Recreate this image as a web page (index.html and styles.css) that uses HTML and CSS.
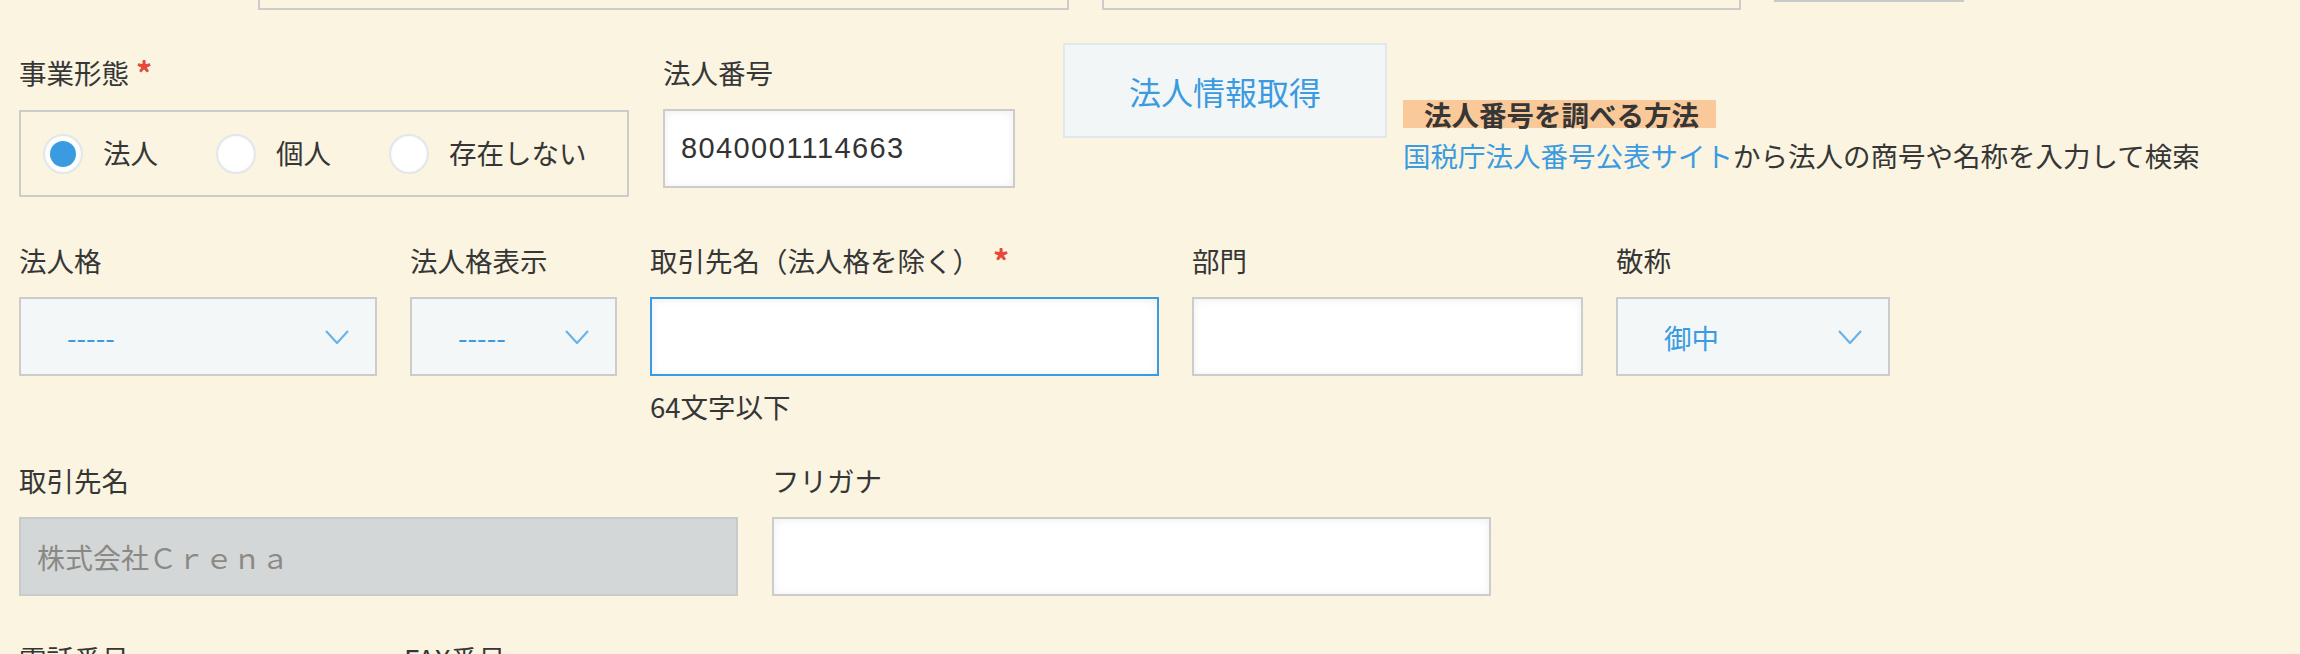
FILE: index.html
```html
<!DOCTYPE html>
<html lang="ja">
<head>
<meta charset="utf-8">
<title>取引先フォーム</title>
<link rel="stylesheet" href="styles.css">
</head>
<body>
<div class="top-strip">
  <div class="top-box top-box-1"></div>
  <div class="top-box top-box-2"></div>
  <div class="top-bar"></div>
</div>

<div class="form">
  <div class="row row1">
    <div class="field col-type">
      <div class="label">事業形態<span class="req">*</span></div>
      <div class="radio-box">
        <label class="radio-item"><span class="radio checked"><span class="dot"></span></span><span class="radio-text">法人</span></label>
        <label class="radio-item"><span class="radio"></span><span class="radio-text">個人</span></label>
        <label class="radio-item"><span class="radio"></span><span class="radio-text">存在しない</span></label>
      </div>
    </div>
    <div class="field col-number">
      <div class="label">法人番号</div>
      <div class="control input number">8040001114663</div>
    </div>
    <div class="fetch-btn">法人情報取得</div>
    <div class="howto">
      <div class="howto-title">法人番号を調べる方法</div>
      <div class="howto-text"><span class="link">国税庁法人番号公表サイト</span>から法人の商号や名称を入力して検索</div>
    </div>
  </div>

  <div class="row row2">
    <div class="field w-kaku">
      <div class="label">法人格</div>
      <div class="control select"><span>-----</span><svg class="chev" viewBox="0 0 24 14" width="24" height="14"><polyline points="1,1 12,13 23,1"/></svg></div>
    </div>
    <div class="field w-kakudisp">
      <div class="label">法人格表示</div>
      <div class="control select"><span>-----</span><svg class="chev" viewBox="0 0 24 14" width="24" height="14"><polyline points="1,1 12,13 23,1"/></svg></div>
    </div>
    <div class="field w-name">
      <div class="label">取引先名（法人格を除く）<span class="req req-wide">*</span></div>
      <div class="control input focused"></div>
      <div class="hint">64文字以下</div>
    </div>
    <div class="field w-dept">
      <div class="label">部門</div>
      <div class="control input"></div>
    </div>
    <div class="field w-title">
      <div class="label">敬称</div>
      <div class="control select"><span>御中</span><svg class="chev" viewBox="0 0 24 14" width="24" height="14"><polyline points="1,1 12,13 23,1"/></svg></div>
    </div>
  </div>

  <div class="row row3">
    <div class="field w-half">
      <div class="label">取引先名</div>
      <div class="control input disabled">株式会社Ｃｒｅｎａ</div>
    </div>
    <div class="field w-half">
      <div class="label">フリガナ</div>
      <div class="control input"></div>
    </div>
  </div>

  <div class="row row4">
    <div class="field w-tel">
      <div class="label">電話番号</div>
    </div>
    <div class="field">
      <div class="label">FAX番号</div>
    </div>
  </div>
</div>
</body>
</html>
```

FILE: styles.css
```css
html, body {
  margin: 0;
  padding: 0;
}
body {
  width: 2300px;
  height: 654px;
  overflow: hidden;
  background: #faf4e1;
  font-family: "Noto Sans CJK JP", "Noto Sans", sans-serif;
  color: #363636;
}

/* cut-off controls at the very top */
.top-strip {
  display: flex;
  align-items: flex-start;
  height: 10px;
  padding-left: 258px;
}
.top-box {
  box-sizing: border-box;
  height: 10px;
  border: 2px solid #cccccc;
  border-top: none;
}
.top-box-1 { width: 811px; }
.top-box-2 { width: 639px; margin-left: 33px; }
.top-bar {
  width: 190px;
  height: 2px;
  background: #c9c9c9;
  margin-left: 33px;
}

.form {
  padding-left: 19px;
}
.row {
  display: flex;
  align-items: flex-start;
}
.field {
  display: flex;
  flex-direction: column;
  flex: none;
}
.label {
  font-size: 27.5px;
  line-height: 36px;
  height: 36px;
  white-space: nowrap;
}
.req {
  color: #e6483a;
  font-weight: 700;
  font-size: 32px;
  line-height: 1;
  vertical-align: -2px;
  margin-left: 7px;
}
.req-wide {
  margin-left: 13px;
}

.control {
  box-sizing: border-box;
  margin-top: 19px;
  height: 79px;
  border: 2px solid #cccccc;
  display: flex;
  align-items: center;
}
.input {
  background: #ffffff;
  box-shadow: inset 0 1px 8px rgba(0, 0, 0, 0.07);
  padding: 0 16px;
  font-size: 29px;
  color: #333333;
  white-space: nowrap;
}
.input.number {
  font-family: "Liberation Sans", "Noto Sans CJK JP", sans-serif;
  font-size: 29px;
  letter-spacing: 1.4px;
}
.input.focused {
  border-color: #3a9be0;
}
.input.disabled {
  background: #d3d7d8;
  border-color: #c8cbcc;
  box-shadow: none;
  color: #8c8984;
  font-size: 28px;
}
.select {
  background: #f4f7f8;
  justify-content: space-between;
  padding: 0 26px 0 46px;
  font-size: 27.5px;
  color: #3a9be0;
}
.chev {
  display: block;
  fill: none;
  stroke: #6ab3e6;
  stroke-width: 2.2;
}

/* row 1 */
.row1 {
  margin-top: 33px;
}
.col-type {
  width: 610px;
  margin-top: 11px;
}
.radio-box {
  box-sizing: border-box;
  margin-top: 20px;
  height: 87px;
  border: 2px solid #cccccc;
  display: flex;
  align-items: center;
  padding-left: 22px;
}
.radio-item {
  display: flex;
  align-items: center;
  flex: none;
  margin-right: 58px;
  white-space: nowrap;
}
.radio {
  box-sizing: border-box;
  flex: none;
  width: 40px;
  height: 40px;
  border-radius: 50%;
  border: 2px solid #e1e7ea;
  background: #ffffff;
  box-shadow: inset 0 0 3px rgba(0, 0, 0, 0.05);
  display: flex;
  align-items: center;
  justify-content: center;
  margin-right: 20px;
}
.dot {
  width: 26px;
  height: 26px;
  border-radius: 50%;
  background: #3a9be0;
}
.radio-text {
  font-size: 27.5px;
  line-height: 36px;
  padding-bottom: 4px;
  color: #363636;
}
.col-number {
  width: 352px;
  margin-left: 34px;
  margin-top: 11px;
}
.fetch-btn {
  box-sizing: border-box;
  flex: none;
  width: 324px;
  height: 95px;
  margin-left: 48px;
  background: #f3f6f7;
  border: 2px solid #e1e8eb;
  color: #3a9be0;
  font-size: 32px;
  display: flex;
  align-items: center;
  justify-content: center;
}
.howto {
  margin-left: 16px;
  margin-top: 57px;
}
.howto-title {
  display: inline-block;
  background: #f9c99a;
  font-weight: 700;
  font-size: 27.5px;
  line-height: 28px;
  height: 28px;
  padding: 0 17px 0 21px;
  color: #363636;
}
.howto-text {
  margin-top: 6px;
  font-size: 27.5px;
  line-height: 36px;
  white-space: nowrap;
}
.link {
  color: #3a9be0;
}

/* row 2 */
.row2 {
  margin-top: 45px;
  gap: 33px;
}
.w-kaku { width: 358px; }
.w-kakudisp { width: 207px; }
.w-name { width: 509px; }
.w-dept { width: 391px; }
.w-title { width: 274px; }
.hint {
  margin-top: 12px;
  font-size: 27.5px;
  line-height: 36px;
}

/* row 3 */
.row3 {
  margin-top: 38px;
  gap: 34px;
}
.w-half { width: 719px; }

/* row 4 */
.row4 {
  margin-top: 44px;
  gap: 33px;
}
.w-tel { width: 352px; }
```
